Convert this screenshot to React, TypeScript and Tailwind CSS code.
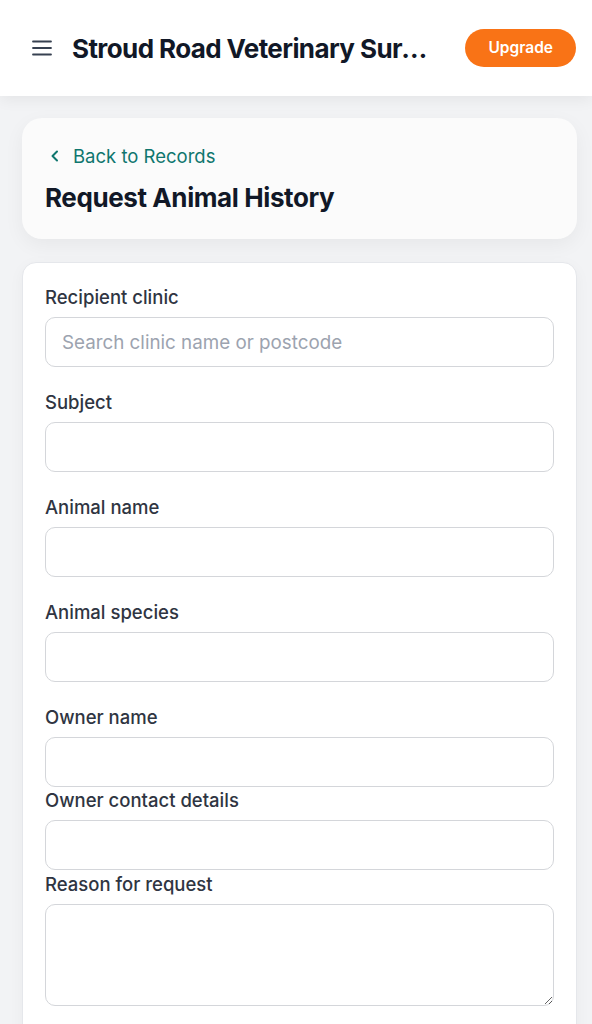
import React from "react";

function Field({ label, placeholder, tight }: { label: string; placeholder?: string; tight?: boolean }) {
  return (
    <div className={tight ? "mb-0" : "mb-[23px]"}>
      <label className="block text-[18.5px] leading-6 font-medium text-[#2f3542] mb-2">{label}</label>
      <input
        type="text"
        placeholder={placeholder}
        className="block w-full h-[50px] rounded-[10px] border border-[#d4d6da] bg-white px-4 text-[18.8px] text-[#1f2937] placeholder:text-[#9ca3af] outline-none"
      />
    </div>
  );
}

export default function App() {
  return (
    <div className="min-h-screen bg-[#f2f3f5] font-['Inter',sans-serif]">
      {/* Header */}
      <header className="h-24 bg-white flex items-center pl-8 pr-4 gap-5 shadow-[0_4px_14px_rgba(0,0,0,0.06)] relative z-10">
        <svg className="w-5 h-5 text-[#374151] shrink-0" viewBox="0 0 20 20" fill="none" stroke="currentColor" strokeWidth="1.8" strokeLinecap="round">
          <path d="M1 3.5h18M1 10h18M1 16.5h18" />
        </svg>
        <h1 className="flex-1 min-w-0 truncate text-[26px] font-bold text-[#111827] tracking-[-0.6px] pr-[4px]">
          Stroud Road Veterinary Surgery
        </h1>
        <button className="shrink-0 h-[38px] px-[23px] rounded-full bg-[#f97316] text-white text-[15.5px] font-semibold">
          Upgrade
        </button>
      </header>

      <main className="pl-[22px] pr-[15px] py-[22px] flex flex-col gap-[23px]">
        {/* Title card */}
        <div className="rounded-[20px] bg-[#fbfbfb] px-[23px] pt-[26px] pb-[25px] shadow-[0_6px_20px_rgba(0,0,0,0.05)]">
          <a className="flex items-center gap-[10px] text-[18.5px] leading-6 text-[#0f766e] mb-[14px]">
            <svg className="w-4 h-4 ml-[2px]" viewBox="0 0 16 16" fill="none" stroke="currentColor" strokeWidth="2" strokeLinecap="round" strokeLinejoin="round">
              <path d="M10 3.5 5.5 8l4.5 4.5" />
            </svg>
            Back to Records
          </a>
          <h2 className="text-[26px] leading-8 font-bold text-[#111827] tracking-[-0.4px]">Request Animal History</h2>
        </div>

        {/* Form card */}
        <div className="rounded-[14px] bg-white border border-[#e5e7eb] px-[22px] pt-[22px] pb-6 shadow-[0_4px_16px_rgba(0,0,0,0.04)]">
          <Field label="Recipient clinic" placeholder="Search clinic name or postcode" />
          <Field label="Subject" />
          <Field label="Animal name" />
          <Field label="Animal species" />
          <Field label="Owner name" tight />
          <div className="h-[1px]" />
          <Field label="Owner contact details" tight />
          <div className="mb-6">
            <label className="block text-[18.5px] leading-6 font-medium text-[#2f3542] mb-2 mt-[2px]">Reason for request</label>
            <textarea className="block w-full h-[102px] rounded-[10px] border border-[#d4d6da] bg-white px-4 py-3 text-[18px] outline-none" />
          </div>
          <Field label="Requested records" />
        </div>
      </main>
    </div>
  );
}
